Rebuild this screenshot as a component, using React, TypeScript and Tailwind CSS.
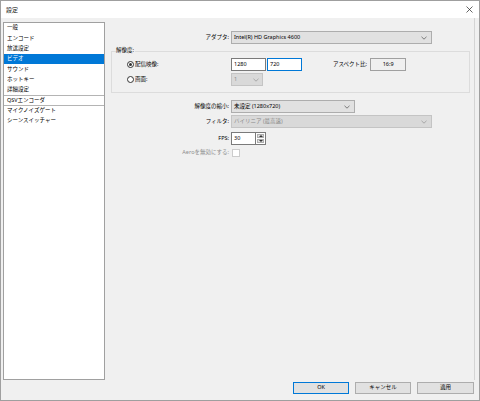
import React from "react";

function Chevron({ color = "#606060" }: { color?: string }) {
  return (
    <svg width="6" height="4" viewBox="0 0 6 4" className="shrink-0">
      <path d="M0.5 0.8 L3 3.2 L5.5 0.8" fill="none" stroke={color} strokeWidth="0.8" />
    </svg>
  );
}

function Radio({ checked }: { checked?: boolean }) {
  return (
    <div className="w-[7px] h-[7px] rounded-full border border-[#333] bg-white flex items-center justify-center shrink-0">
      {checked && <div className="w-[3px] h-[3px] rounded-full bg-[#333]" />}
    </div>
  );
}

const items = [
  "一般",
  "エンコード",
  "放送設定",
  "ビデオ",
  "サウンド",
  "ホットキー",
  "詳細設定",
  "QSVエンコーダ",
  "マイクノイズゲート",
  "シーンスイッチャー",
];

export default function App() {
  return (
    <div className="w-[480px] h-[401px] border border-[#9f9f9f] bg-[#f0f0f0] flex flex-col overflow-hidden text-[5.5px] leading-none text-black font-['Noto_Sans','Noto_Sans_CJK_JP',sans-serif]">
      {/* title bar */}
      <div className="h-[17px] shrink-0 bg-white flex items-center justify-between pl-[5px] pr-[6px]">
        <span className="text-[6px] text-[#222]">設定</span>
        <svg width="7" height="7" viewBox="0 0 7 7">
          <path d="M0.5 0.5 L6.5 6.5 M6.5 0.5 L0.5 6.5" stroke="#222" strokeWidth="0.7" />
        </svg>
      </div>

      <div className="flex flex-col flex-1">
        <div className="flex h-[362px] shrink-0">
          {/* list */}
          <div className="ml-[2px] mt-[4px] w-[102px] h-[358px] border border-[#a0a0a0] bg-white flex flex-col shrink-0">
            {items.map((it, i) => (
              <div
                key={it}
                className={
                  "h-[10.33px] flex items-center pl-[3px] shrink-0 " +
                  (i === 3 ? "bg-[#0078d7] text-white " : "") +
                  (i === 7 ? "border-t border-b border-[#b4b4b4] " : "")
                }
              >
                {it}
              </div>
            ))}
          </div>

          {/* right panel */}
          <div className="w-[370px] border-r border-[#d4d4d4] flex flex-col shrink-0">
            {/* adapter */}
            <div className="flex items-center h-[13px] mt-[13px]">
              <div className="w-[124px] text-right">アダプタ:</div>
              <div className="ml-[2px] w-[201px] h-[13px] bg-[#e1e1e1] border border-[#adadad] flex items-center justify-between pl-[2px] pr-[4px]">
                <span>Intel(R) HD Graphics 4600</span>
                <Chevron />
              </div>
            </div>

            {/* resolution group */}
            <div className="relative ml-[6px] mt-[7px] w-[359px] h-[42px] border border-[#dcdcdc] flex flex-col pt-[6px]">
              <div className="absolute left-[4px] top-[-4px] bg-[#f0f0f0] pr-[1px]">解像度:</div>
              <div className="flex items-center h-[13px]">
                <div className="w-[117px] pl-[15px] flex items-center gap-[1px]">
                  <Radio checked />
                  <span>配信映像:</span>
                </div>
                <div className="ml-[2px] w-[35px] h-[13px] bg-white border border-[#7a7a7a] flex items-center pl-[2px]">1280</div>
                <div className="ml-[1px] w-[35px] h-[13px] bg-white border border-[#0078d7] flex items-center pl-[2px]">720</div>
                <div className="ml-[31px]">アスペクト比:</div>
                <div className="ml-[3px] w-[36px] h-[13px] bg-[#f0f0f0] border border-[#a0a0a0] flex items-center justify-center">16:9</div>
              </div>
              <div className="flex items-center h-[13px] mt-[2px]">
                <div className="w-[117px] pl-[15px] flex items-center gap-[1px]">
                  <Radio />
                  <span>画面:</span>
                </div>
                <div className="ml-[2px] w-[32px] h-[13px] bg-[#d9d9d9] border border-[#c4c4c4] flex items-center justify-between pl-[2px] pr-[3px] text-[#8a8a8a]">
                  <span>1</span>
                  <Chevron color="#9a9a9a" />
                </div>
              </div>
            </div>

            {/* downscale */}
            <div className="flex items-center h-[13px] mt-[7px]">
              <div className="w-[124px] text-right">解像度の縮小:</div>
              <div className="ml-[2px] w-[124px] h-[13px] bg-[#e1e1e1] border border-[#adadad] flex items-center justify-between pl-[2px] pr-[4px]">
                <span>未設定 (1280x720)</span>
                <Chevron />
              </div>
            </div>

            {/* filter */}
            <div className="flex items-center h-[13px] mt-[2px]">
              <div className="w-[124px] text-right">フィルタ:</div>
              <div className="ml-[2px] w-[201px] h-[13px] bg-[#d9d9d9] border border-[#c4c4c4] flex items-center justify-between pl-[2px] pr-[4px] text-[#8a8a8a]">
                <span>バイリニア (最高速)</span>
                <Chevron color="#9a9a9a" />
              </div>
            </div>

            {/* FPS */}
            <div className="flex items-center h-[13px] mt-[4px]">
              <div className="w-[124px] text-right">FPS:</div>
              <div className="ml-[2px] w-[25px] h-[13px] bg-white border border-[#7a7a7a] flex items-center pl-[2px]">30</div>
              <div className="w-[10px] h-[13px] flex flex-col bg-white border border-l-0 border-[#7a7a7a] p-[1px] gap-[1px]">
                <div className="flex-1 bg-[#e1e1e1] border border-[#adadad] flex items-center justify-center">
                  <svg width="4" height="2" viewBox="0 0 4 2"><path d="M0 2 L2 0 L4 2 Z" fill="#333" /></svg>
                </div>
                <div className="flex-1 bg-[#e1e1e1] border border-[#adadad] flex items-center justify-center">
                  <svg width="4" height="2" viewBox="0 0 4 2"><path d="M0 0 L2 2 L4 0 Z" fill="#333" /></svg>
                </div>
              </div>
            </div>

            {/* Aero */}
            <div className="flex items-center h-[10px] mt-[3px]">
              <div className="w-[124px] text-right text-[#8d8d8d]">Aeroを無効にする:</div>
              <div className="ml-[3px] w-[8px] h-[8px] bg-white border border-[#cccccc]" />
            </div>
          </div>
        </div>

        {/* buttons */}
        <div className="flex justify-end gap-[6px] pr-[5px] mt-[2px]">
          <div className="w-[56px] h-[12px] bg-[#e1e1e1] border border-[#0078d7] flex items-center justify-center">OK</div>
          <div className="w-[56px] h-[12px] bg-[#e1e1e1] border border-[#adadad] flex items-center justify-center">キャンセル</div>
          <div className="w-[57px] h-[12px] bg-[#e1e1e1] border border-[#adadad] flex items-center justify-center">適用</div>
        </div>
      </div>
    </div>
  );
}
